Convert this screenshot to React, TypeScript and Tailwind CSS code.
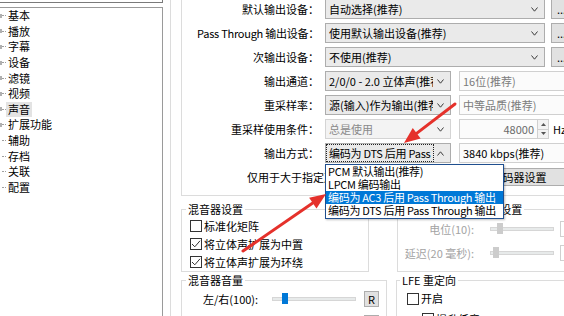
import React from "react";
import clsx from "clsx";

const treeItems = [
  { label: "基本", kids: true },
  { label: "播放", kids: true },
  { label: "字幕", kids: true },
  { label: "设备", kids: true },
  { label: "滤镜", kids: true },
  { label: "视频", kids: true },
  { label: "声音", kids: true, selected: true },
  { label: "扩展功能", kids: true },
  { label: "辅助" },
  { label: "存档" },
  { label: "关联" },
  { label: "配置" },
];

const outputModes = [
  { t: "PCM 默认输出(推荐)" },
  { t: "LPCM 编码输出" },
  { t: "编码为 AC3 后用 Pass Through 输出", sel: true },
  { t: "编码为 DTS 后用 Pass Through 输出" },
];

function Chevron({ up = false }: { up?: boolean }) {
  return (
    <svg width="7" height="5" viewBox="0 0 7 5" className="shrink-0">
      <polyline
        points={up ? "0.5,4.5 3.5,0.8 6.5,4.5" : "0.5,0.5 3.5,4.2 6.5,0.5"}
        fill="none"
        stroke="#3a3a3a"
        strokeWidth="1"
      />
    </svg>
  );
}

function Combo({
  text,
  w,
  disabled,
  open,
  children,
}: {
  text: string;
  w: string;
  disabled?: boolean;
  open?: boolean;
  children?: React.ReactNode;
}) {
  return (
    <div
      className={clsx(
        "relative flex h-[20px] shrink-0 items-center border pr-[6px]",
        w,
        disabled ? "border-[#d4d4d4] bg-[#f3f3f3] text-[#8a8a8a]" : "border-[#adadad] bg-[#eaeaea]"
      )}
    >
      <span
        className={clsx(
          "ml-px mr-[4px] flex h-[16px] flex-1 items-center overflow-hidden whitespace-nowrap pl-[2px]",
          open && "outline outline-1 outline-dotted outline-[#222] tracking-[-0.25px]"
        )}
      >
        {text}
      </span>
      <Chevron up={open} />
      {children}
    </div>
  );
}

function TextBox({ text, w, gray }: { text: string; w: string; gray?: boolean }) {
  return (
    <div
      className={clsx(
        "flex h-[20px] shrink-0 items-center overflow-hidden whitespace-nowrap border border-[#d0d0d0] bg-[#fbfbfb] pl-[3px]",
        w,
        gray ? "text-[#7c7c7c]" : "text-black"
      )}
    >
      {text}
    </div>
  );
}

function Row({ label, children, tight }: { label: string; children: React.ReactNode; tight?: boolean }) {
  return (
    <div className="flex h-[20px] items-center">
      <span className={clsx("w-[137px] shrink-0 whitespace-nowrap text-right", tight && "tracking-[-0.25px]")}>
        {label}
      </span>
      <div className="ml-[6px] flex items-center">{children}</div>
    </div>
  );
}

function DotsBtn() {
  return (
    <div className="ml-[6px] flex h-[20px] w-[21px] shrink-0 items-center justify-center border border-[#adadad] bg-[#e1e1e1] leading-none">
      ...
    </div>
  );
}

function Check({ on }: { on?: boolean }) {
  return (
    <span className="flex h-[12px] w-[12px] shrink-0 items-center justify-center border border-[#333] bg-white">
      {on && (
        <svg width="10" height="10" viewBox="0 0 10 10">
          <polyline points="1,5 3.8,7.8 9,1.8" fill="none" stroke="#333" strokeWidth="1" />
        </svg>
      )}
    </span>
  );
}

function Track({ w, left, color }: { w: string; left: string; color: string }) {
  return (
    <div className={clsx("relative h-[4px] shrink-0 border border-[#d6d6d6] bg-[#e7eaea]", w)}>
      <div className={clsx("absolute top-[-5px] h-[11px] w-[6px]", left, color)} />
    </div>
  );
}

function arrow(x1: number, y1: number, x2: number, y2: number) {
  const dx = x2 - x1;
  const dy = y2 - y1;
  const len = Math.hypot(dx, dy);
  const ux = dx / len;
  const uy = dy / len;
  const hl = 16;
  const hw = 6.5;
  const bx = x2 - ux * hl;
  const by = y2 - uy * hl;
  return {
    line: [x1, y1, bx + ux * 3, by + uy * 3],
    head: `${x2},${y2} ${bx - uy * hw},${by + ux * hw} ${bx + uy * hw},${by - ux * hw}`,
  };
}

export default function App() {
  const a1 = arrow(455, 104, 404, 143);
  const a2 = arrow(243, 251, 326, 194);

  return (
    <div className="relative flex h-[316px] w-[564px] overflow-hidden bg-white font-['Microsoft_YaHei','Noto_Sans_CJK_SC',sans-serif] text-[11px] leading-[13px] text-black">
      {/* tree */}
      <div className="w-[170px] shrink-0">
        <div className="h-[3px] w-[163px] border-b border-r border-[#7a7a7a]" />
        <div className="mt-[4px] h-[312px] w-[163px] border-r border-t border-[#9a9a9a]">
          {treeItems.map((it) => (
            <div key={it.label} className="flex h-[15.6px] items-center">
              <span className="flex w-[6px] items-center">
                <span className={clsx("h-[4px] w-[2px]", it.kids ? "bg-[#b0b0b0]" : "bg-transparent")} />
                <span className="w-[4px] border-t border-dotted border-[#a0a0a0]" />
              </span>
              <span className={clsx("px-[2px] leading-[15px]", it.selected && "bg-[#e3e3e3]")}>{it.label}</span>
            </div>
          ))}
        </div>
      </div>

      {/* settings page */}
      <div className="flex-1 border-l border-[#dcdcdc] pl-[10px]">
        <div className="h-[197px] w-[420px] border-b border-l border-[#dcdcdc]">
          <div className="-mt-px flex flex-col gap-[4px]">
            <Row label="默认输出设备：">
              <Combo w="w-[220px]" text="自动选择(推荐)" />
              <DotsBtn />
            </Row>
            <Row label="Pass Through 输出设备：" tight>
              <Combo w="w-[220px]" text="使用默认输出设备(推荐)" />
              <DotsBtn />
            </Row>
            <Row label="次输出设备：">
              <Combo w="w-[220px]" text="不使用(推荐)" />
              <DotsBtn />
            </Row>
            <Row label="输出通道：">
              <Combo w="w-[126px]" text="2/0/0 - 2.0 立体声(推荐)" />
              <div className="ml-[8px]">
                <TextBox w="w-[120px]" text="16位(推荐)" gray />
              </div>
            </Row>
            <Row label="重采样率：">
              <Combo w="w-[126px]" text="源(输入)作为输出(推荐)" />
              <div className="ml-[8px]">
                <TextBox w="w-[120px]" text="中等品质(推荐)" gray />
              </div>
            </Row>
            <Row label="重采样使用条件：">
              <Combo w="w-[126px]" text="总是使用" disabled />
              <div className="ml-[8px] flex items-center">
                <div className="flex h-[20px] w-[79px] items-center justify-end border border-[#d0d0d0] bg-[#fbfbfb] pr-[3px] text-[#6a6a6a]">
                  48000
                </div>
                <div className="flex h-[20px] w-[11px] flex-col border border-l-0 border-[#d0d0d0] bg-[#f3f3f3]">
                  <div className="flex flex-1 items-center justify-center border-b border-[#d0d0d0]">
                    <svg width="5" height="3" viewBox="0 0 5 3">
                      <polygon points="0,3 2.5,0 5,3" fill="#555" />
                    </svg>
                  </div>
                  <div className="flex flex-1 items-center justify-center">
                    <svg width="5" height="3" viewBox="0 0 5 3">
                      <polygon points="0,0 2.5,3 5,0" fill="#555" />
                    </svg>
                  </div>
                </div>
                <span className="ml-[4px]">Hz</span>
              </div>
            </Row>
            <Row label="输出方式：">
              <Combo w="w-[126px]" text="编码为 DTS 后用 Pass Through 输出" open>
                <div className="absolute left-[-1px] top-[20px] z-10 flex h-[55px] w-[179px] flex-col overflow-hidden border border-[#1f4f8f] bg-white shadow-[1px_1px_2px_rgba(0,0,0,0.25)]">
                  {outputModes.map((m) => (
                    <div
                      key={m.t}
                      className={clsx(
                        "h-[13px] whitespace-nowrap pl-[2px] tracking-[-0.3px]",
                        m.sel && "bg-[#0078d7] text-white"
                      )}
                    >
                      {m.t}
                    </div>
                  ))}
                </div>
              </Combo>
              <div className="ml-[8px]">
                <TextBox w="w-[120px]" text="3840 kbps(推荐)" />
              </div>
            </Row>
            <div className="flex h-[20px] items-center">
              <span className="ml-[65px] w-[212px] shrink-0 overflow-hidden whitespace-nowrap">仅用于大于指定声道数的音源</span>
              <div className="flex h-[18px] w-[120px] shrink-0 items-center justify-center border border-[#adadad] bg-[#e1e1e1]">
                编码器设置
              </div>
            </div>
          </div>
        </div>

        {/* mixer settings */}
        <div className="mt-[7px] flex items-start">
          <fieldset className="w-[188px] border border-[#dcdcdc] pt-px">
            <legend className="ml-[4px] px-[2px]">混音器设置</legend>
            {[
              { t: "标准化矩阵", on: false },
              { t: "将立体声扩展为中置", on: true },
              { t: "将立体声扩展为环绕", on: true },
            ].map((c) => (
              <div key={c.t} className="flex h-[18px] items-center pl-[8px]">
                <Check on={c.on} />
                <span className="ml-[2px]">{c.t}</span>
              </div>
            ))}
          </fieldset>
          <fieldset className="ml-[28px] w-[200px] border border-[#dcdcdc] pb-[6px] pt-px">
            <legend className="ml-[8px] px-[2px]">中置/环绕声道扩展设置</legend>
            <div className="flex h-[24px] items-center text-[#a3a3a3]">
              <span className="w-[76px] text-right">电位(10):</span>
              <div className="ml-[16px]">
                <Track w="w-[64px]" left="left-[6px]" color="bg-[#cccccc]" />
              </div>
              <div className="ml-[6px] h-[16px] w-[20px] border border-[#d0d0d0]" />
            </div>
            <div className="flex h-[24px] items-center text-[#a3a3a3]">
              <span className="w-[76px] text-right">延迟(20 毫秒):</span>
              <div className="ml-[16px]">
                <Track w="w-[64px]" left="left-[2px]" color="bg-[#cccccc]" />
              </div>
              <div className="ml-[6px] h-[16px] w-[20px] border border-[#d0d0d0]" />
            </div>
          </fieldset>
        </div>

        <div className="mt-[2px] flex items-start">
          <fieldset className="h-[60px] w-[206px] border border-[#dcdcdc] pt-px">
            <legend className="ml-[4px] px-[2px]">混音器音量</legend>
            <div className="flex h-[22px] items-center">
              <span className="ml-[21px] w-[54px] whitespace-nowrap">左/右(100):</span>
              <div className="ml-[15px]">
                <Track w="w-[84px]" left="left-[9px]" color="bg-[#0078d7]" />
              </div>
              <div className="ml-[8px] flex h-[16px] w-[15px] items-center justify-center border border-[#adadad] bg-[#e1e1e1]">
                R
              </div>
            </div>
            <div className="flex h-[20px] items-center">
              <div className="ml-[182px] mt-[6px] h-[16px] w-[15px] border border-[#adadad] bg-[#e1e1e1]" />
            </div>
          </fieldset>
          <fieldset className="ml-[9px] h-[60px] w-[200px] border border-[#dcdcdc] pt-px">
            <legend className="ml-[3px] px-[2px]">LFE 重定向</legend>
            <div className="flex h-[21px] items-center pl-[10px]">
              <Check />
              <span className="ml-[2px]">开启</span>
            </div>
            <div className="flex h-[20px] items-center pl-[25px]">
              <Check />
              <span className="ml-[2px]">提升低音</span>
            </div>
          </fieldset>
        </div>
      </div>

      {/* red callout arrows */}
      <svg className="pointer-events-none absolute inset-0 z-20" width="564" height="316">
        {[a1, a2].map((a, i) => (
          <g key={i}>
            <line x1={a.line[0]} y1={a.line[1]} x2={a.line[2]} y2={a.line[3]} stroke="#e5312b" strokeWidth="3" strokeLinecap="round" />
            <polygon points={a.head} fill="#e5312b" />
          </g>
        ))}
      </svg>
    </div>
  );
}
